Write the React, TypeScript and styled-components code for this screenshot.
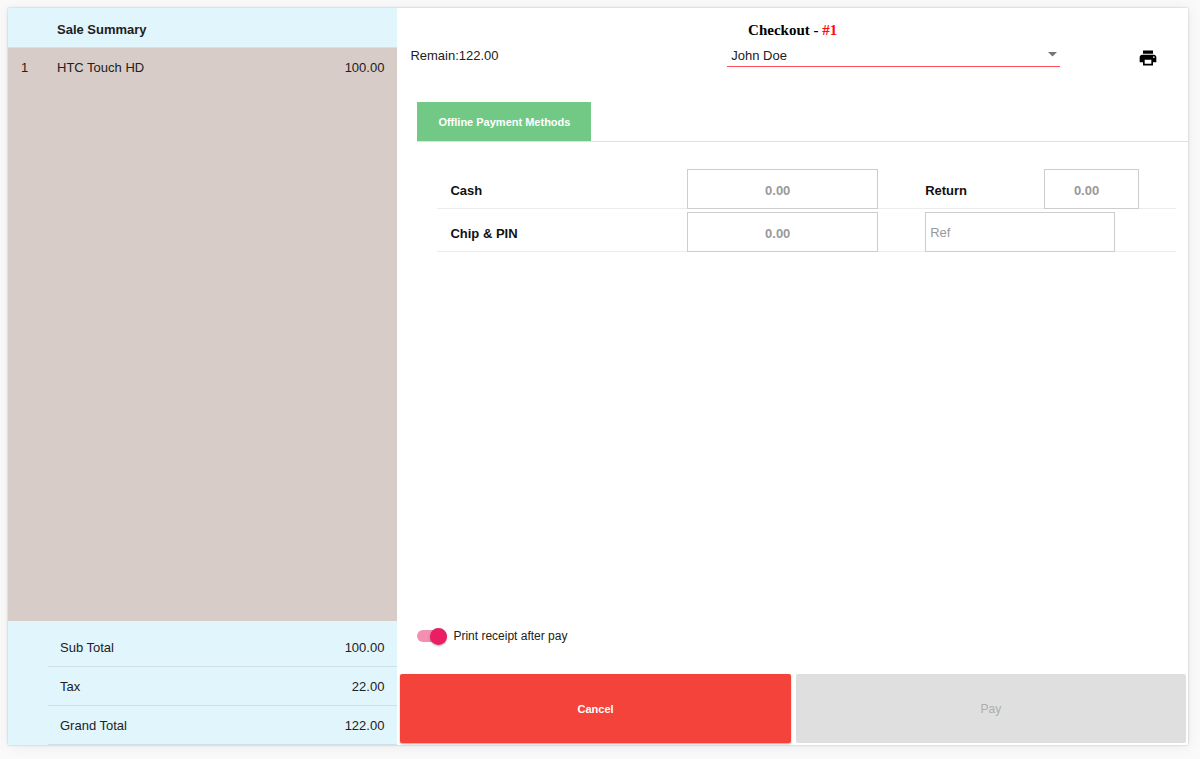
import React, { useState } from "react";
import styled, { createGlobalStyle } from "styled-components";
import { MdPrint } from "react-icons/md";

const GlobalStyle = createGlobalStyle`
  *, *::before, *::after { box-sizing: border-box; }
  body {
    margin: 0;
    background: #fafafa;
    color: #212121;
    font-family: "Liberation Sans", Arial, sans-serif;
    font-size: 13px;
    line-height: 18px;
  }
  button, input, select { font: inherit; color: inherit; margin: 0; }
`;

const Page = styled.div`
  min-height: 100vh;
  display: flex;
  padding: 8px 12px 14px 8px;
`;

const Card = styled.main`
  flex: 1;
  display: flex;
  background: #fff;
  box-shadow: 0 0 2px rgba(0, 0, 0, 0.22), 0 1px 14px rgba(0, 0, 0, 0.07);
`;

const Summary = styled.section`
  flex: 0 0 33%;
  display: flex;
  flex-direction: column;
  background: #e1f5fc;
`;

const SummaryTitle = styled.h2`
  margin: 0;
  padding: 13px 12px 8px 49px;
  border-bottom: 1px solid #d3e1e6;
  font-size: 13px;
  line-height: 18px;
  font-weight: bold;
`;

const Items = styled.div`
  flex: 1;
  background: #d7ccc8;
`;

const ItemTable = styled.table`
  width: 100%;
  border-collapse: collapse;
`;

const TotalsTable = styled(ItemTable)`
  width: auto;
  display: grid;
  margin-left: 40px;
  padding-top: 7px;

  tbody { display: block; }
  tr {
    display: flex;
    justify-content: space-between;
    border-bottom: 1px solid #cfe1e8;
  }
`;

const Cell = styled.td<{ $align?: "left" | "right"; $width?: string }>`
  width: ${(p) => p.$width ?? "auto"};
  padding: 11px 13px 9px 0;
  text-align: ${(p) => p.$align ?? "left"};
  font-weight: normal;
`;

const IndexCell = styled(Cell)`
  padding-left: 13px;
`;

const TotalCell = styled(Cell)`
  padding: 11px 13px 9px 12px;
`;

const Checkout = styled.section`
  flex: 1;
  min-width: 0;
  display: flex;
  flex-direction: column;
  padding-top: 13px;
`;

const Title = styled.h1`
  margin: 0 0 5px;
  color: #000;
  font-family: "Liberation Serif", "Times New Roman", serif;
  font-size: 15px;
  line-height: 18px;
  text-align: center;
`;

const OrderNumber = styled.span`
  color: #ff0a16;
`;

const Toolbar = styled.div`
  display: grid;
  grid-template-columns: 330fr 333fr 128fr;
  height: 24px;
`;

const Remain = styled.div`
  padding: 3px 0 0 13px;
`;

const SelectBox = styled.div`
  position: relative;
  height: 23px;
  border-bottom: 1px solid #ff4f5a;
`;

const Select = styled.select`
  width: 100%;
  height: 22px;
  padding: 2px 24px 0 4px;
  border: 0;
  background: transparent;
  appearance: none;
  outline: none;
`;

const Caret = styled.svg`
  position: absolute;
  top: 8px;
  right: 3px;
  pointer-events: none;
`;

const PrintButton = styled.button`
  align-self: end;
  justify-self: end;
  display: flex;
  margin-right: 30px;
  padding: 0;
  border: 0;
  background: none;
  color: #000;
  cursor: pointer;
`;

const Tabs = styled.div`
  display: flex;
  margin: 34px 0 0 20px;
  border-bottom: 1px solid #e0e0e0;
`;

const Tab = styled.button`
  height: 39px;
  padding: 0 21px;
  border: 0;
  background: #71c985;
  color: #fff;
  font-size: 11px;
  font-weight: bold;
`;

const Methods = styled.form`
  flex: 1;
  padding: 24px 12px 24px 40px;
`;

const MethodRow = styled.div`
  display: grid;
  grid-template-columns: 250fr 191fr 47fr 119fr 71fr 24fr 37fr;
  padding-top: 3px;
  border-bottom: 1px solid #ececec;
`;

const MethodLabel = styled.label<{ $column: number; $inset?: boolean }>`
  grid-column: ${(p) => p.$column};
  padding: 13px 0 0 ${(p) => (p.$inset ? "13px" : "0")};
  color: #111;
  font-weight: bold;
`;

const Field = styled.input<{ $column: string }>`
  grid-column: ${(p) => p.$column};
  width: 100%;
  min-width: 0;
  height: 40px;
  margin-bottom: -1px;
  padding: 0 4px;
  border: 1px solid #cdcdcd;
  border-radius: 0;
  background: #fff;
  outline: none;
  &::placeholder { color: #999; opacity: 1; }
`;

const Amount = styled(Field)`
  padding: 2px 10px 0 0;
  font-weight: bold;
  text-align: center;
`;

const PrintToggle = styled.label`
  align-self: flex-start;
  display: flex;
  align-items: center;
  gap: 6px;
  height: 20px;
  margin: 0 0 28px 20px;
  font-size: 12px;
`;

const Switch = styled.input`
  position: relative;
  appearance: none;
  width: 30px;
  height: 12px;
  border-radius: 6px;
  background: #bdbdbd;
  cursor: pointer;

  &::before {
    content: "";
    position: absolute;
    top: -2px;
    left: 0;
    width: 17px;
    height: 17px;
    border-radius: 50%;
    background: #fafafa;
    box-shadow: 0 1px 2px rgba(0, 0, 0, 0.3);
  }
  &:checked { background: #f48fb1; }
  &:checked::before { left: 13px; background: #e91e63; }
`;

const Actions = styled.div`
  display: flex;
  gap: 5px;
  padding: 0 2px 2px 3px;
`;

const Action = styled.button`
  flex: 1;
  height: 69px;
  border: 0;
  border-radius: 2px;
  font-size: 12px;
  cursor: pointer;
`;

const CancelButton = styled(Action)`
  background: #f4433a;
  color: #fff;
  font-size: 11px;
  font-weight: bold;
  box-shadow: 0 1px 2px rgba(0, 0, 0, 0.35);
`;

const PayButton = styled(Action)`
  background: #dfdfdf;
  color: #adadad;
  cursor: default;
`;

const items = [{ quantity: 1, name: "HTC Touch HD", price: "100.00" }];

const totals = [
  { label: "Sub Total", value: "100.00" },
  { label: "Tax", value: "22.00" },
  { label: "Grand Total", value: "122.00" },
];

export default function App() {
  const [printReceipt, setPrintReceipt] = useState(true);

  return (
    <Page>
      <GlobalStyle />
      <Card>
        <Summary>
          <SummaryTitle>Sale Summary</SummaryTitle>
          <Items>
            <ItemTable>
              <tbody>
                {items.map((item) => (
                  <tr key={item.name}>
                    <IndexCell $width="49px">{item.quantity}</IndexCell>
                    <Cell>{item.name}</Cell>
                    <Cell $align="right">{item.price}</Cell>
                  </tr>
                ))}
              </tbody>
            </ItemTable>
          </Items>
          <TotalsTable>
            <tbody>
              {totals.map((total) => (
                <tr key={total.label}>
                  <TotalCell as="th" scope="row">{total.label}</TotalCell>
                  <TotalCell $align="right">{total.value}</TotalCell>
                </tr>
              ))}
            </tbody>
          </TotalsTable>
        </Summary>

        <Checkout>
          <Title>
            Checkout - <OrderNumber>#1</OrderNumber>
          </Title>
          <Toolbar>
            <Remain>Remain:122.00</Remain>
            <SelectBox>
              <Select aria-label="Customer" defaultValue="john">
                <option value="john">John Doe</option>
              </Select>
              <Caret width="9" height="5" viewBox="0 0 9 5" aria-hidden="true">
                <path d="M0 0h9L4.5 4.5z" fill="#757575" />
              </Caret>
            </SelectBox>
            <PrintButton type="button" aria-label="Print">
              <MdPrint size={20} />
            </PrintButton>
          </Toolbar>

          <Tabs role="tablist">
            <Tab type="button" role="tab" aria-selected="true">
              Offline Payment Methods
            </Tab>
          </Tabs>

          <Methods>
            <MethodRow>
              <MethodLabel htmlFor="cash" $column={1} $inset>Cash</MethodLabel>
              <Amount id="cash" $column="2" placeholder="0.00" inputMode="decimal" />
              <MethodLabel htmlFor="return" $column={4}>Return</MethodLabel>
              <Amount id="return" $column="5 / span 2" placeholder="0.00" readOnly />
            </MethodRow>
            <MethodRow>
              <MethodLabel htmlFor="chip" $column={1} $inset>Chip &amp; PIN</MethodLabel>
              <Amount id="chip" $column="2" placeholder="0.00" inputMode="decimal" />
              <Field $column="4 / span 2" placeholder="Ref" aria-label="Reference" />
            </MethodRow>
          </Methods>

          <PrintToggle>
            <Switch
              type="checkbox"
              role="switch"
              checked={printReceipt}
              onChange={(e) => setPrintReceipt(e.target.checked)}
            />
            Print receipt after pay
          </PrintToggle>

          <Actions>
            <CancelButton type="button">Cancel</CancelButton>
            <PayButton type="button" disabled>Pay</PayButton>
          </Actions>
        </Checkout>
      </Card>
    </Page>
  );
}
